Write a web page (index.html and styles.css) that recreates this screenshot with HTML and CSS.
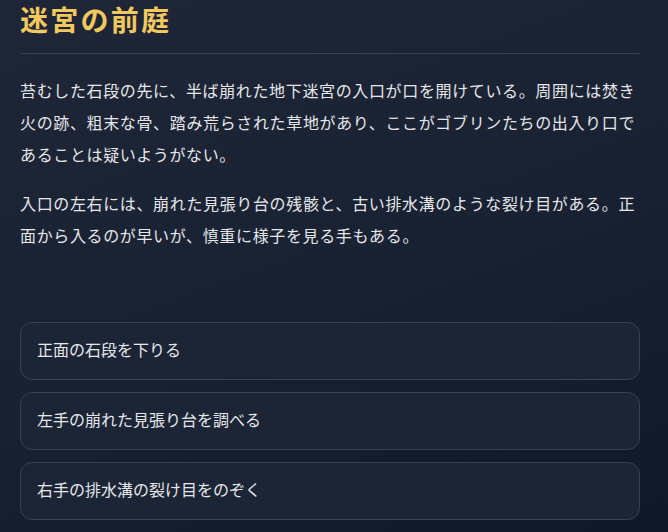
FILE: index.html
```html
<!DOCTYPE html>
<html lang="ja">
<head>
<meta charset="utf-8">
<link rel="stylesheet" href="styles.css">
</head>
<body>
<main class="scene">
  <h1 class="title">迷宮の前庭</h1>
  <div class="story">
    <p>苔むした石段の先に、半ば崩れた地下迷宮の入口が口を開けている。周囲には焚き火の跡、粗末な骨、踏み荒らされた草地があり、ここがゴブリンたちの出入り口であることは疑いようがない。</p>
    <p>入口の左右には、崩れた見張り台の残骸と、古い排水溝のような裂け目がある。正面から入るのが早いが、慎重に様子を見る手もある。</p>
  </div>
  <div class="choices">
    <button class="choice">正面の石段を下りる</button>
    <button class="choice">左手の崩れた見張り台を調べる</button>
    <button class="choice">右手の排水溝の裂け目をのぞく</button>
  </div>
</main>
</body>
</html>
```
FILE: styles.css
```css
html, body {
  margin: 0;
  height: 100%;
}
body {
  background: linear-gradient(160deg, #1e2637 0%, #192233 50%, #0f1729 100%);
  color: #e5e7eb;
  font-family: serif, "Noto Sans CJK JP", sans-serif;
}
.scene {
  width: 620px;
  margin-left: 20px;
  padding-top: 2px;
}
.title {
  margin: 0;
  font-size: 28px;
  line-height: 40px;
  letter-spacing: 0.08em;
  font-weight: 700;
  color: #f2c85f;
  padding-bottom: 11px;
  border-bottom: 1px solid #334155;
}
.story {
  margin-top: 22px;
}
.story p {
  margin: 0 0 17px;
  font-size: 16px;
  line-height: 32px;
  letter-spacing: 0.04em;
}
.choices {
  margin-top: 69px;
  display: flex;
  flex-direction: column;
  gap: 12px;
}
.choice {
  display: block;
  width: 100%;
  text-align: left;
  background: #1b2536;
  border: 1px solid #344256;
  border-radius: 12px;
  padding: 16px 16px;
  font-family: inherit;
  font-size: 16px;
  line-height: 24px;
  color: #e5e7eb;
}
```
